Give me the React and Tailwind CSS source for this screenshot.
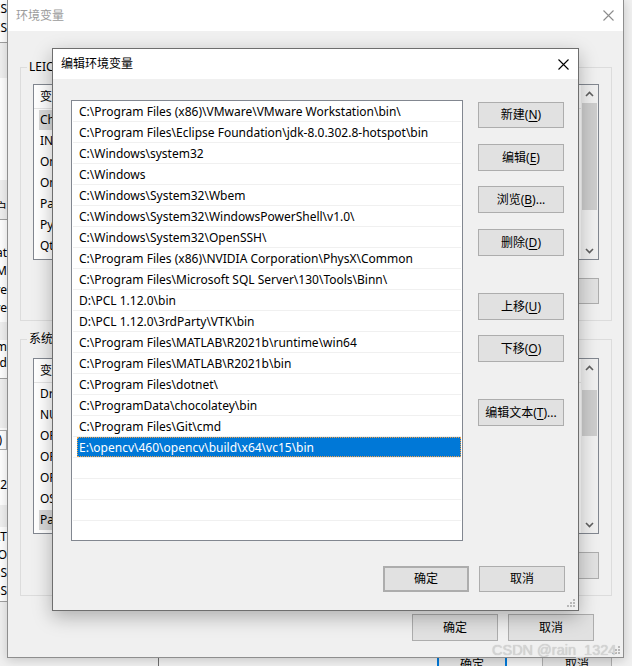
import React from "react";

const paths = [
  "C:\\Program Files (x86)\\VMware\\VMware Workstation\\bin\\",
  "C:\\Program Files\\Eclipse Foundation\\jdk-8.0.302.8-hotspot\\bin",
  "C:\\Windows\\system32",
  "C:\\Windows",
  "C:\\Windows\\System32\\Wbem",
  "C:\\Windows\\System32\\WindowsPowerShell\\v1.0\\",
  "C:\\Windows\\System32\\OpenSSH\\",
  "C:\\Program Files (x86)\\NVIDIA Corporation\\PhysX\\Common",
  "C:\\Program Files\\Microsoft SQL Server\\130\\Tools\\Binn\\",
  "D:\\PCL 1.12.0\\bin",
  "D:\\PCL 1.12.0\\3rdParty\\VTK\\bin",
  "C:\\Program Files\\MATLAB\\R2021b\\runtime\\win64",
  "C:\\Program Files\\MATLAB\\R2021b\\bin",
  "C:\\Program Files\\dotnet\\",
  "C:\\ProgramData\\chocolatey\\bin",
  "C:\\Program Files\\Git\\cmd",
];

const userVars = [
  "ChocolateyLastPathUpdate",
  "INTELLIJ_HOME",
  "OneDrive",
  "OneDriveConsumer",
  "Path",
  "PyCharm Community Edition",
  "QtMsBuild",
];

const sysVars = [
  "DriverData",
  "NUMBER_OF_PROCESSORS",
  "OPENNI2_INCLUDE64",
  "OPENNI2_LIB64",
  "OPENNI2_REDIST64",
  "OS",
  "Path",
];

const CloseIcon = ({ color = "#000" }) => (
  <svg width="11" height="11" viewBox="0 0 11 11">
    <path d="M0.5 0.5L10.5 10.5M10.5 0.5L0.5 10.5" stroke={color} strokeWidth="1.1" fill="none" />
  </svg>
);

const Chevron = ({ up }) => (
  <svg width="9" height="6" viewBox="0 0 9 6">
    <path d={up ? "M1 5L4.5 1.5L8 5" : "M1 1L4.5 4.5L8 1"} stroke="#606060" strokeWidth="1.6" fill="none" />
  </svg>
);

const Grip = () => (
  <svg className="absolute right-[2px] bottom-[2px]" width="9" height="9" viewBox="0 0 9 9">
    <g fill="#b8b8b8">
      <rect x="6" y="0" width="2" height="2" />
      <rect x="3" y="3" width="2" height="2" />
      <rect x="6" y="3" width="2" height="2" />
      <rect x="0" y="6" width="2" height="2" />
      <rect x="3" y="6" width="2" height="2" />
      <rect x="6" y="6" width="2" height="2" />
    </g>
  </svg>
);

const Btn = ({ children, className = "" }) => (
  <div
    className={`w-[86px] h-[26px] flex items-center justify-center bg-[#e1e1e1] border border-[#adadad] text-black ${className}`}
  >
    {children}
  </div>
);

const Mn = ({ l }) => <span className="underline underline-offset-2">{l}</span>;

// list view of the back dialog, mostly hidden under the front one
const VarList = ({ items, selected, thumbTop, thumbH }) => (
  <div className="relative h-[176px] bg-white border border-[#828790] flex">
    <div className="flex-1 flex flex-col">
      <div className="h-[24px] flex items-center pl-[6px] border-b border-[#e5e5e5]">
        <span className="w-[150px]">变量</span>
        <span>值</span>
      </div>
      {items.map((v, i) => (
        <div key={v} className="h-[21px] flex items-center pl-[5px]">
          <span className={`h-[20px] flex items-center pl-[1px] pr-2 w-[530px] ${i === selected ? "bg-[#d9d9d9]" : ""}`}>
            {v}
          </span>
        </div>
      ))}
    </div>
    <div className="w-[17px] flex flex-col bg-[#f0f0f0]">
      <div className="h-[17px] flex items-center justify-center">
        <Chevron up />
      </div>
      <div className="flex-1 relative">
        <div className="absolute left-[1px] right-[1px] bg-[#cdcdcd]" style={{ top: thumbTop, height: thumbH }} />
      </div>
      <div className="h-[17px] flex items-center justify-center">
        <Chevron />
      </div>
    </div>
  </div>
);

const GroupBox = ({ label, children, className = "" }) => (
  <div className={`relative border border-[#dcdcdc] px-[12px] ${className}`}>
    <span className="absolute -top-[9px] left-[6px] px-[2px] bg-[#f0f0f0] leading-[16px]">{label}</span>
    {children}
  </div>
);

export default function App() {
  return (
    <div className="relative w-[632px] h-[666px] overflow-hidden bg-[#f0f0f0] text-[12px] text-black font-['Noto_Sans','Noto_Sans_CJK_SC',sans-serif]">
      {/* far back window, only its edges show */}
      <div className="absolute left-0 top-0 w-[7px] h-[610px] overflow-hidden bg-white">
        <div className="absolute right-0 top-[1px] whitespace-nowrap leading-[16px]">VMWARE_ES</div>
        <div className="absolute right-0 top-[20px] whitespace-nowrap leading-[16px]">VMWARE_ES</div>
        <div className="absolute left-0 right-0 top-[42px] h-[36px] bg-[#f0f0f0] border-t border-[#a0a0a0]" />
        <div className="absolute left-0 right-0 top-[180px] h-[40px] bg-[#f0f0f0] border-b border-[#a0a0a0]" />
        <div className="absolute right-0 top-[200px] whitespace-nowrap leading-[16px]">用户</div>
        <div className="absolute right-0 top-[245px] whitespace-nowrap leading-[16px]">Chocolat</div>
        <div className="absolute right-0 top-[263px] whitespace-nowrap leading-[16px]">IDEA M</div>
        <div className="absolute right-0 top-[282px] whitespace-nowrap leading-[16px]">OneDrive</div>
        <div className="absolute right-0 top-[300px] whitespace-nowrap leading-[16px]">OneDrive</div>
        <div className="absolute left-0 right-0 top-[322px] h-[18px] bg-[#f0f0f0]" />
        <div className="absolute right-0 top-[339px] whitespace-nowrap leading-[16px]">Program</div>
        <div className="absolute right-0 top-[355px] whitespace-nowrap leading-[16px]">build</div>
        <div className="absolute left-0 right-0 top-[378px] h-[50px] bg-[#f0f0f0] border-t border-[#a0a0a0]" />
        <div className="absolute right-0 top-[430px] h-[20px] px-1 border border-[#adadad] whitespace-nowrap leading-[18px]">(S)</div>
        <div className="absolute right-0 top-[477px] whitespace-nowrap leading-[16px]">OPENNI2</div>
        <div className="absolute left-0 right-0 top-[505px] h-[22px] bg-[#f0f0f0]" />
        <div className="absolute right-0 top-[529px] whitespace-nowrap leading-[16px]">.EXT</div>
        <div className="absolute right-0 top-[547px] whitespace-nowrap leading-[16px]">O</div>
        <div className="absolute right-0 top-[565px] whitespace-nowrap leading-[16px]">SS</div>
        <div className="absolute right-0 top-[583px] whitespace-nowrap leading-[16px]">SS</div>
        <div className="absolute left-0 right-0 top-[601px] h-[9px] bg-[#f0f0f0] border-t border-[#a0a0a0]" />
      </div>
      <div className="absolute left-[158px] top-[600px] w-px h-[70px] bg-[#6e6e6e]" />
      <div className="absolute left-[437px] top-[652px] w-[70px] h-[26px] border-2 border-[#0078d7] bg-[#e1e1e1] flex items-center justify-center">确定</div>
      <div className="absolute left-[542px] top-[652px] w-[70px] h-[26px] border border-[#adadad] bg-[#e1e1e1] flex items-center justify-center">取消</div>

      {/* back dialog: 环境变量 */}
      <div className="absolute left-[7px] top-0 w-[617px] h-[658px] bg-[#f0f0f0] border border-t-0 border-[#8e8e8e] shadow-[0_2px_10px_rgba(0,0,0,0.18)] flex flex-col">
        <div className="h-[31px] shrink-0 bg-white flex items-center justify-between pl-[8px] pr-[9px]">
          <span className="text-[#9b9b9b]">环境变量</span>
          <CloseIcon color="#8c8c8c" />
        </div>
        <GroupBox label="LEICA 的用户变量(U)" className="mt-[36px] ml-[12px] mr-[11px] h-[254px] pt-[16px]">
          <VarList items={userVars} selected={0} thumbTop={1} thumbH={107} />
          <div className="flex justify-end gap-[10px] mt-[18px]">
            <Btn>新建(<Mn l="N" />)...</Btn>
            <Btn>编辑(<Mn l="E" />)...</Btn>
            <Btn>删除(<Mn l="D" />)</Btn>
          </div>
        </GroupBox>
        <GroupBox label="系统变量(S)" className="mt-[18px] ml-[12px] mr-[11px] h-[257px] pt-[18px]">
          <VarList items={sysVars} selected={6} thumbTop={14} thumbH={46} />
          <div className="flex justify-end gap-[10px] mt-[18px]">
            <Btn className="h-[27px]">新建(<Mn l="W" />)...</Btn>
            <Btn className="h-[27px]">编辑(<Mn l="I" />)...</Btn>
            <Btn className="h-[27px]">删除(<Mn l="L" />)</Btn>
          </div>
        </GroupBox>
        <div className="flex justify-end gap-[10px] mt-[18px] mr-[29px]">
          <Btn className="h-[27px]">确定</Btn>
          <Btn className="h-[27px]">取消</Btn>
        </div>
        <Grip />
      </div>

      {/* front dialog: 编辑环境变量 */}
      <div className="absolute left-[52px] top-[48px] w-[527px] h-[563px] bg-[#f0f0f0] border border-[#6e6e6e] shadow-[0_6px_18px_rgba(0,0,0,0.28)] flex flex-col">
        <div className="h-[30px] shrink-0 bg-white flex items-center justify-between pl-[8px] pr-[9px]">
          <span>编辑环境变量</span>
          <CloseIcon />
        </div>
        <div className="flex pl-[18px] pt-[21px]">
          <div className="w-[392px] h-[441px] bg-white border border-[#828790] flex flex-col overflow-hidden">
            {paths.map((p) => (
              <div key={p} className="h-[21px] shrink-0 mx-px border-b border-[#f0f0f0] flex items-center pl-[6px] pt-[2px] whitespace-nowrap">
                {p}
              </div>
            ))}
            <div className="h-[21px] shrink-0 mx-px border-b border-[#f0f0f0] flex items-center pl-[4px]">
              <div className="h-[20px] flex-1 flex items-center pl-[2px] pt-[1px] bg-[#0078d7] text-white outline-1 outline-dotted outline-[#f0a24a] -outline-offset-1">
                E:\opencv\460\opencv\build\x64\vc15\bin
              </div>
            </div>
            {[0, 1, 2].map((i) => (
              <div key={i} className="h-[21px] shrink-0 mx-px border-b border-[#f0f0f0]" />
            ))}
          </div>
          <div className="ml-[15px] w-[86px] flex flex-col">
            <Btn className="mt-[2px]">新建(<Mn l="N" />)</Btn>
            <Btn className="mt-[16px] h-[27px]">编辑(<Mn l="E" />)</Btn>
            <Btn className="mt-[15px] h-[27px]">浏览(<Mn l="B" />)...</Btn>
            <Btn className="mt-[16px] h-[27px]">删除(<Mn l="D" />)</Btn>
            <Btn className="mt-[37px] h-[27px]">上移(<Mn l="U" />)</Btn>
            <Btn className="mt-[15px] h-[27px]">下移(<Mn l="O" />)</Btn>
            <Btn className="mt-[37px] h-[27px]">编辑文本(<Mn l="T" />)...</Btn>
          </div>
        </div>
        <div className="flex justify-end gap-[10px] mt-[25px] pr-[13px]">
          <Btn className="border-2 border-[#0078d7]">确定</Btn>
          <Btn>取消</Btn>
        </div>
        <Grip />
      </div>

      {/* watermark */}
      <div className="absolute left-[492px] top-[641px] text-[14.5px] leading-[18px] text-[#d4d4d4] font-['Liberation_Sans',sans-serif] [text-shadow:0_0_1px_rgba(0,0,0,0.22)]">
        CSDN @rain_1324
      </div>
    </div>
  );
}
